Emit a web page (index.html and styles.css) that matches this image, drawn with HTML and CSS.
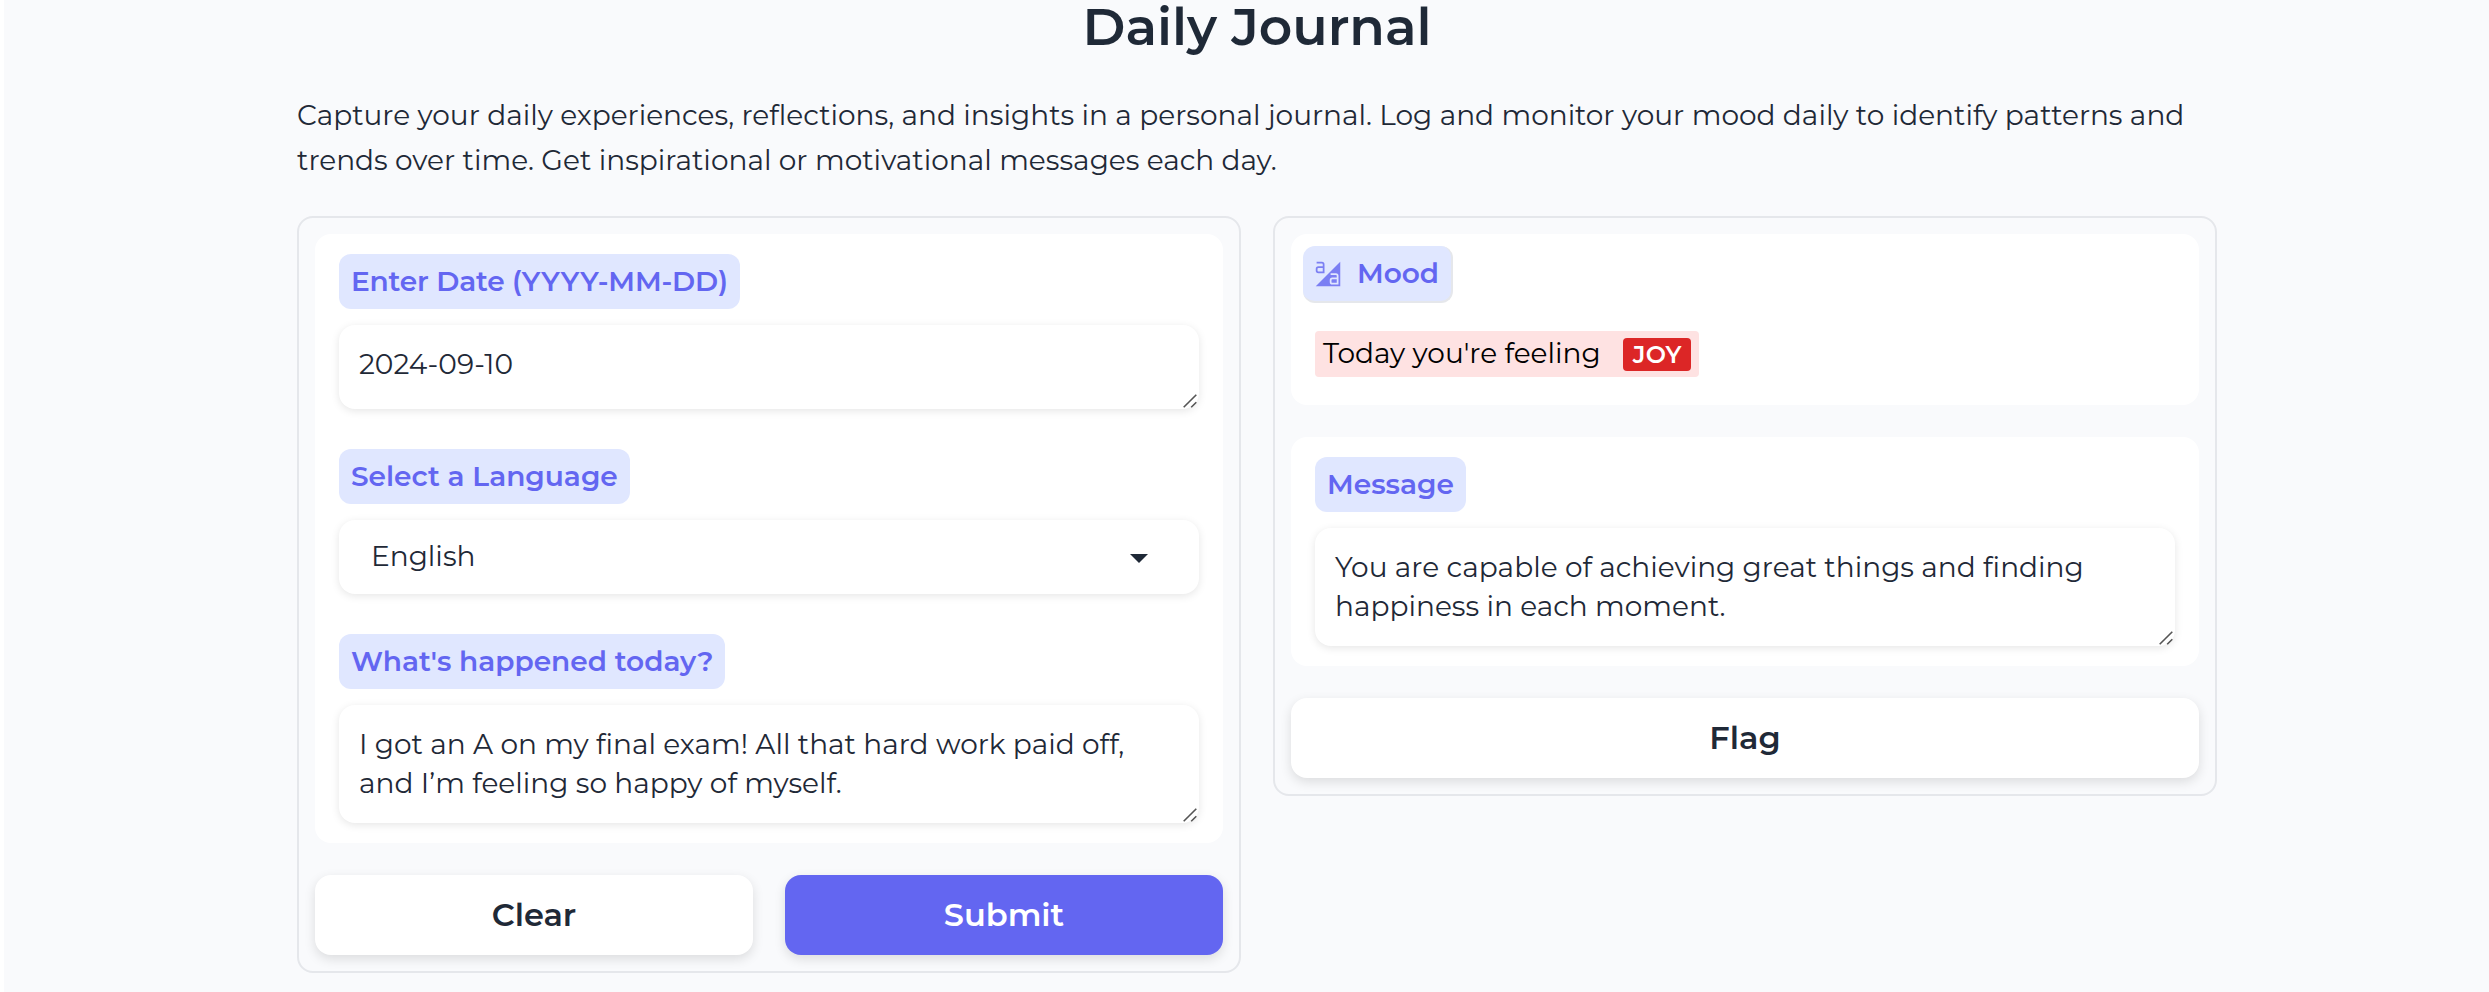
FILE: index.html
```
<!DOCTYPE html>
<html lang="en">
<head>
<meta charset="utf-8">
<title>Daily Journal</title>
<link rel="stylesheet" href="styles.css">
</head>
<body>
<main class="app">
  <h1 class="title">Daily Journal</h1>
  <p class="intro">Capture your daily experiences, reflections, and insights in a personal journal. Log and monitor your mood daily to identify patterns and trends over time. Get inspirational or motivational messages each day.</p>
  <div class="columns">
    <section class="panel">
      <div class="card form">
        <div class="group">
          <span class="label date-label">Enter Date (YYYY-MM-DD)</span>
          <div class="field">2024-09-10<svg class="grip" viewBox="0 0 14 14"><path d="M.7 13.3 13.3.7M8.2 13.3l5.1-5.1"/></svg></div>
        </div>
        <div class="group">
          <span class="label">Select a Language</span>
          <div class="field select"><span>English</span><svg class="caret" viewBox="0 0 18 9"><path d="M0 0h18L9 9z"/></svg></div>
        </div>
        <div class="group">
          <span class="label">What's happened today?</span>
          <div class="field tall">I got an A on my final exam! All that hard work paid off,<br>and I’m feeling so happy of myself.<svg class="grip" viewBox="0 0 14 14"><path d="M.7 13.3 13.3.7M8.2 13.3l5.1-5.1"/></svg></div>
        </div>
      </div>
      <div class="actions">
        <button class="button">Clear</button>
        <button class="button primary">Submit</button>
      </div>
    </section>
    <section class="panel">
      <div class="card mood">
        <span class="label mood-label"><svg class="icon" viewBox="0 0 32 32"><path d="M12 15H5a3 3 0 0 1-3-3v-2a3 3 0 0 1 3-3h5V5a1 1 0 0 0-1-1H3V2h6a3 3 0 0 1 3 3zM5 9a1 1 0 0 0-1 1v2a1 1 0 0 0 1 1h5V9zm15 14v2a1 1 0 0 0 1 1h5v-4h-5a1 1 0 0 0-1 1"/><path d="M2 30h28V2Zm26-2h-7a3 3 0 0 1-3-3v-2a3 3 0 0 1 3-3h5v-2a1 1 0 0 0-1-1h-6v-2h6a3 3 0 0 1 3 3Z"/></svg>Mood</span>
        <div class="highlight"><span>Today you're feeling</span><span class="tag">JOY</span></div>
      </div>
      <div class="card form">
        <div class="group">
          <span class="label">Message</span>
          <div class="field tall">You are capable of achieving great things and finding<br>happiness in each moment.<svg class="grip" viewBox="0 0 14 14"><path d="M.7 13.3 13.3.7M8.2 13.3l5.1-5.1"/></svg></div>
        </div>
      </div>
      <div class="actions">
        <button class="button">Flag</button>
      </div>
    </section>
  </div>
</main>
</body>
</html>
```
FILE: styles.css
```
* { box-sizing: border-box; }
body {
  margin: 0;
  min-height: 992px;
  border-left: 4px solid #fff;
  background: #f9fafc;
  background-clip: padding-box;
  color: #1f2937;
  font: 400 28px/1.4 Montserrat, Inter, sans-serif;
}
html { background: #fff; overflow: hidden; }
.app { width: 1920px; margin-left: 293px; }
.title { margin: 0; font-size: 52px; line-height: 54px; font-weight: 600; text-align: center; }
.intro { margin: 0; padding: 39px 0 33px; line-height: 45px; letter-spacing: .008px; }
.columns { display: flex; align-items: flex-start; gap: 32px; }
.panel {
  flex: 1;
  display: flex;
  flex-direction: column;
  gap: 32px;
  padding: 16px;
  border: 2px solid #e5e7eb;
  border-radius: 16px;
}
.card { background: #fff; border-radius: 16px; }
.form { display: flex; flex-direction: column; gap: 40px; padding: 20px 24px; }
.group { display: flex; flex-direction: column; align-items: flex-start; gap: 16px; }
.label {
  padding: 0 12px;
  border-radius: 12px;
  background: #e0e7ff;
  color: #6366f1;
  font-weight: 600;
  line-height: 55px;
}
.date-label { letter-spacing: -.16px; }
.field {
  position: relative;
  width: 100%;
  height: 84px;
  padding: 20px;
  border-radius: 16px;
  background: #fff;
  box-shadow: 0 2px 8px rgba(0, 0, 0, .1);
}
.tall { height: 118px; }
.select {
  display: flex;
  align-items: center;
  justify-content: space-between;
  height: 74px;
  padding: 0 51px 0 32px;
}
.caret { width: 18px; height: 9px; margin-top: 3px; fill: #1f2937; }
.grip {
  position: absolute;
  right: 2px;
  bottom: 1px;
  width: 14px;
  height: 14px;
  fill: none;
  stroke: #555;
  stroke-width: 1.6;
}
.actions { display: flex; gap: 32px; }
.button {
  flex: 1;
  height: 80px;
  border: 0;
  border-radius: 16px;
  background: #fff;
  color: #1f2937;
  font: 600 32px/1.4 Montserrat, Inter, sans-serif;
  box-shadow: 0 4px 12px rgba(0, 0, 0, .12);
}
.primary { background: #6366f1; color: #fff; }
.mood {
  display: flex;
  flex-direction: column;
  align-items: flex-start;
  gap: 28px;
  padding: 12px 12px 28px;
}
.mood-label {
  display: flex;
  align-items: center;
  gap: 15px;
  padding: 0 12px 0 11px;
  border: solid #e5e7eb;
  border-width: 0 2px 2px 0;
}
.icon { width: 28px; height: 28px; fill: currentColor; opacity: .8; }
.highlight {
  display: flex;
  align-items: center;
  height: 46px;
  margin-left: 12px;
  padding: 0 8px;
  border-radius: 4px;
  background: #fee2e2;
  color: #000;
  gap: 22px;
}
.tag {
  padding: 0 9px 0 10px;
  border-radius: 4px;
  background: #dc2626;
  color: #fff;
  font-size: 24px;
  font-weight: 600;
  line-height: 33px;
  letter-spacing: .3px;
}
```
